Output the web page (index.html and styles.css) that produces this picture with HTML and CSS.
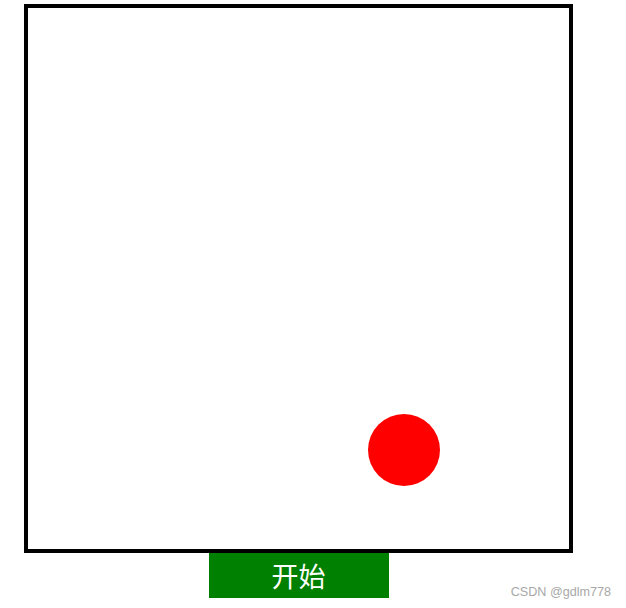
FILE: index.html
```html
<!DOCTYPE html>
<html lang="zh">
<head>
<meta charset="utf-8">
<title>小球</title>
<link rel="stylesheet" href="styles.css">
</head>
<body>
  <div class="stage">
    <div class="board">
      <div class="ball" style="left: 340px; top: 406px;"></div>
    </div>
    <button class="start">开始</button>
  </div>
  <div class="mark">CSDN @gdlm778</div>
</body>
</html>
```
FILE: styles.css
```css
html, body {
  margin: 0;
  padding: 0;
  background: #fff;
}

body {
  width: 626px;
  height: 608px;
  position: relative;
  overflow: hidden;
}

.stage {
  display: flex;
  flex-direction: column;
  align-items: center;
  width: 549px;
  padding: 4px 0 0 24px;
}

.board {
  position: relative;
  box-sizing: border-box;
  width: 549px;
  height: 549px;
  border: 4px solid #000;
}

.ball {
  position: absolute;
  width: 72px;
  height: 72px;
  border-radius: 50%;
  background: #f00;
}

.start {
  width: 180px;
  height: 45px;
  margin: 0;
  padding: 0;
  border: none;
  background: #008000;
  color: #fff;
  font-family: "Noto Sans CJK SC", sans-serif;
  font-size: 27px;
  line-height: 45px;
}

.mark {
  position: absolute;
  right: 15px;
  bottom: 9px;
  font-family: "Liberation Sans", Arial, sans-serif;
  font-size: 12.6px;
  color: #a8a8a8;
}
```
